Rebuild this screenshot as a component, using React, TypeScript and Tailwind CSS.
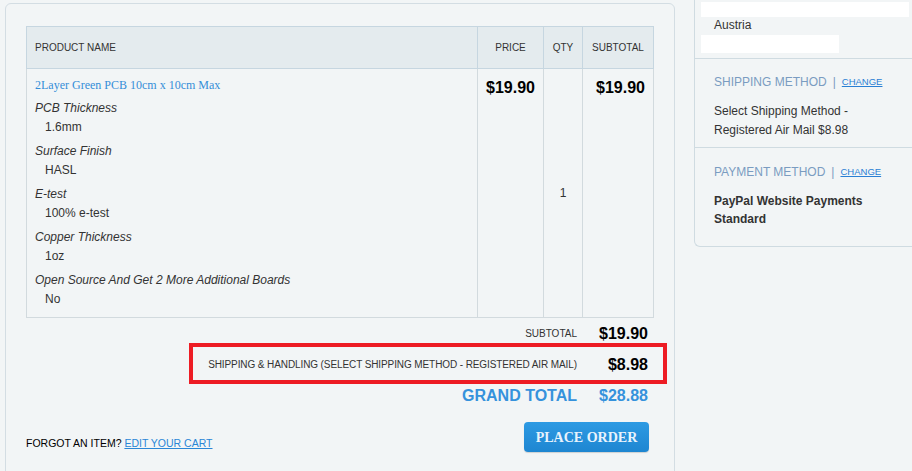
import React from "react";

interface ProductOption {
  label: string;
  value: string;
}

const options: ProductOption[] = [
  { label: "PCB Thickness", value: "1.6mm" },
  { label: "Surface Finish", value: "HASL" },
  { label: "E-test", value: "100% e-test" },
  { label: "Copper Thickness", value: "1oz" },
  { label: "Open Source And Get 2 More Additional Boards", value: "No" },
];

const HeaderCell = ({
  children,
  last = false,
  align = "center",
}: {
  children: React.ReactNode;
  last?: boolean;
  align?: "left" | "center";
}) => (
  <div
    className={`h-[43px] flex items-center border-t border-b border-l border-[#c6d6e0] bg-[#e4ebee] text-[10px] text-[#333] ${
      last ? "border-r" : ""
    } ${align === "left" ? "justify-start pl-[8px]" : "justify-center"}`}
  >
    {children}
  </div>
);

const SideSection = ({
  title,
  children,
  className,
}: {
  title: string;
  children: React.ReactNode;
  className: string;
}) => (
  <div className={`pl-[19px] ${className}`}>
    <div className="flex items-center leading-[16px]">
      <span className="text-[12px] text-[#7a9cc1]">{title}</span>
      <span className="mx-[6px] text-[12px] text-[#7a9cc1]">|</span>
      <a className="text-[9.5px] text-[#2a7fd4] underline">CHANGE</a>
    </div>
    {children}
  </div>
);

const App = () => {
  return (
    <div className="w-[912px] h-[471px] overflow-hidden bg-[#f2f5f6] flex items-start font-['Liberation_Sans',Arial,sans-serif] text-[#333]">
      {/* Order review panel */}
      <div className="ml-[5px] mt-[3px] w-[670px] h-[520px] shrink-0 border border-[#d3dde3] rounded-[6px] bg-[#f2f5f6] pt-[22px] px-[20px]">
        <div className="w-[628px]">
          {/* Cart table */}
          <div className="grid grid-cols-[451px_66px_39px_72px]">
            <HeaderCell align="left">PRODUCT NAME</HeaderCell>
            <HeaderCell>PRICE</HeaderCell>
            <HeaderCell>QTY</HeaderCell>
            <HeaderCell last>SUBTOTAL</HeaderCell>

            <div className="border-l border-b border-[#d2dade] pl-[8px] pt-[7px] pb-[8px]">
              <a className="block leading-[18px] text-[12px] text-[#358ed8] font-['Liberation_Serif','Times_New_Roman',serif]">
                2Layer Green PCB 10cm x 10cm Max
              </a>
              <div className="mt-[5px] flex flex-col gap-[5px] text-[12px]">
                {options.map((opt) => (
                  <div key={opt.label}>
                    <div className="italic leading-[19px]">{opt.label}</div>
                    <div className="pl-[10px] leading-[19px]">{opt.value}</div>
                  </div>
                ))}
              </div>
            </div>
            <div className="border-l border-b border-[#d2dade] pt-[7px] pr-[8px] text-right">
              <span className="leading-[20px] text-[16px] font-bold text-black">
                $19.90
              </span>
            </div>
            <div className="border-l border-b border-[#d2dade] flex items-center justify-center text-[12px]">
              1
            </div>
            <div className="border-l border-r border-b border-[#d2dade] pt-[7px] pr-[8px] text-right">
              <span className="leading-[20px] text-[16px] font-bold text-black">
                $19.90
              </span>
            </div>
          </div>

          {/* Totals */}
          <div className="flex justify-end items-center h-[31px]">
            <span className="text-[10px]">SUBTOTAL</span>
            <span className="w-[77px] pr-[6px] text-right text-[16px] font-bold text-black">
              $19.90
            </span>
          </div>
          <div className="relative flex justify-end items-center h-[31px]">
            <span className="text-[10px] tracking-[-0.1px]">
              SHIPPING &amp; HANDLING (SELECT SHIPPING METHOD - REGISTERED AIR MAIL)
            </span>
            <span className="w-[77px] pr-[6px] text-right text-[16px] font-bold text-black">
              $8.98
            </span>
            {/* highlight annotation */}
            <div className="absolute left-[163px] top-[-6px] w-[478px] h-[41px] border-4 border-[#ed1c24]" />
          </div>
          <div className="flex justify-end items-center h-[31px] text-[#3592dc]">
            <span className="text-[16px] font-bold">GRAND TOTAL</span>
            <span className="w-[77px] pr-[6px] text-right text-[16px] font-bold">
              $28.88
            </span>
          </div>

          <div className="mt-[11px] flex justify-between items-start">
            <div className="pt-[15px] text-[10.5px] leading-[12px] text-black">
              FORGOT AN ITEM?{" "}
              <a className="text-[#2a86d6] underline">EDIT YOUR CART</a>
            </div>
            <button className="mr-[5px] w-[125px] h-[30px] rounded-[4px] bg-gradient-to-b from-[#2d9ae3] to-[#1e86d1] shadow-[0_1px_1px_rgba(0,0,0,0.15)] text-[#e8f3fc] text-[14px] font-bold font-['Liberation_Serif','Times_New_Roman',serif]">
              PLACE ORDER
            </button>
          </div>
        </div>
      </div>

      {/* Order summary sidebar */}
      <div className="ml-[19px] w-[240px] shrink-0 border-l border-b border-[#cfdbe1] rounded-bl-[6px] bg-[#f2f5f6]">
        <div className="pt-[2px] pb-[5px] border-b border-[#cfdbe1]">
          <div className="ml-[6px] w-[208px] h-[15px] bg-white" />
          <div className="pl-[19px] leading-[17px] text-[12px]">Austria</div>
          <div className="ml-[6px] mt-[1px] w-[138px] h-[18px] bg-white" />
        </div>
        <SideSection
          title="SHIPPING METHOD"
          className="pt-[15px] pb-[7px] border-b border-[#cfdbe1]"
        >
          <div className="mt-[12px] text-[12px] leading-[19px]">
            Select Shipping Method -
            <br />
            Registered Air Mail $8.98
          </div>
        </SideSection>
        <SideSection title="PAYMENT METHOD" className="pt-[16px] pb-[18px]">
          <div className="mt-[12px] text-[12px] leading-[18px] font-bold">
            PayPal Website Payments
            <br />
            Standard
          </div>
        </SideSection>
      </div>
    </div>
  );
};

export default App;
